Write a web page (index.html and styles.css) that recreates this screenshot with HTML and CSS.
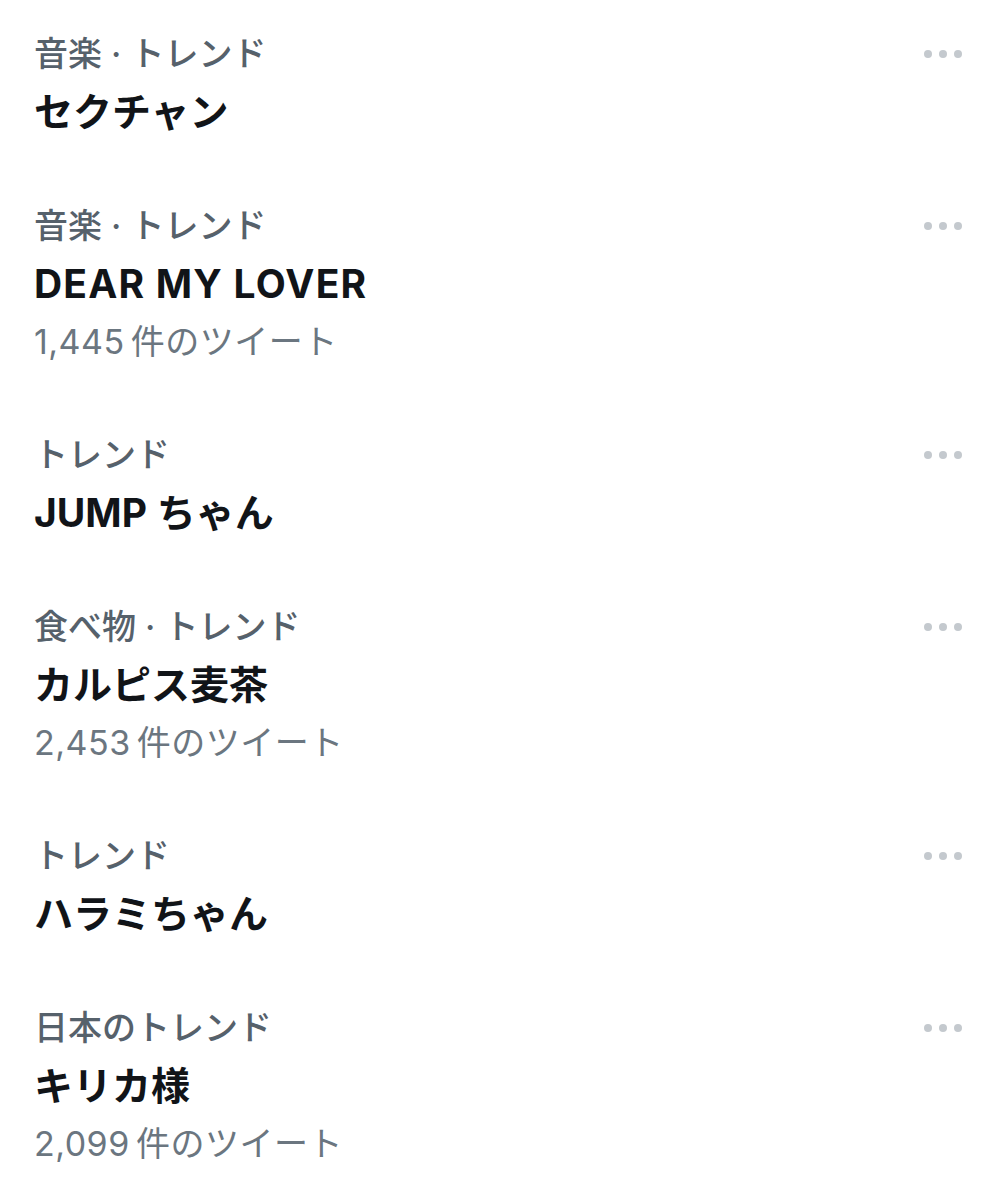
FILE: index.html
```html
<!DOCTYPE html>
<html lang="ja">
<head>
  <meta charset="UTF-8" />
  <meta name="viewport" content="width=device-width, initial-scale=1.0" />
  <title>トレンド</title>
  <link rel="stylesheet" href="styles.css">
</head>
<body>

  <ul class="trends">
    <li class="trend">
      <div class="trend-text">
        <div class="trend-cat">音楽 · トレンド</div>
        <div class="trend-title">セクチャン</div>
      </div>
      <span class="more"><i></i><i></i><i></i></span>
    </li>
    <li class="trend">
      <div class="trend-text">
        <div class="trend-cat">音楽 · トレンド</div>
        <div class="trend-title latin">DEAR MY LOVER</div>
        <div class="trend-count">1,445&#8198;件のツイート</div>
      </div>
      <span class="more"><i></i><i></i><i></i></span>
    </li>
    <li class="trend">
      <div class="trend-text">
        <div class="trend-cat">トレンド</div>
        <div class="trend-title">JUMP&#8197;ちゃん</div>
      </div>
      <span class="more"><i></i><i></i><i></i></span>
    </li>
    <li class="trend">
      <div class="trend-text">
        <div class="trend-cat">食べ物 · トレンド</div>
        <div class="trend-title">カルピス麦茶</div>
        <div class="trend-count">2,453&#8198;件のツイート</div>
      </div>
      <span class="more"><i></i><i></i><i></i></span>
    </li>
    <li class="trend">
      <div class="trend-text">
        <div class="trend-cat">トレンド</div>
        <div class="trend-title">ハラミちゃん</div>
      </div>
      <span class="more"><i></i><i></i><i></i></span>
    </li>
    <li class="trend">
      <div class="trend-text">
        <div class="trend-cat">日本のトレンド</div>
        <div class="trend-title">キリカ様</div>
        <div class="trend-count">2,099&#8198;件のツイート</div>
      </div>
      <span class="more"><i></i><i></i><i></i></span>
    </li>
  </ul>

</body>
</html>
```

FILE: styles.css
```css
body {
  margin: 0;
  background: #fff;
  font-family: Inter, "Noto Sans CJK JP", sans-serif;
}

.trends {
  list-style: none;
  margin: 0;
  padding: 0;
}

.trend {
  display: flex;
  justify-content: space-between;
  align-items: flex-start;
  padding: 25px 36px 31px 34px;
}

.trend-cat {
  font-size: 34px;
  line-height: 58px;
  font-weight: 500;
  color: #56616b;
}

.trend-title {
  font-size: 39px;
  line-height: 58px;
  font-weight: 700;
  color: #111418;
}

.trend-title.latin {
  letter-spacing: 1.2px;
}

.trend-count {
  font-size: 34px;
  line-height: 57px;
  font-weight: 400;
  color: #6b7680;
  letter-spacing: 0.5px;
}

/* 三点メニュー */
.more {
  display: flex;
  gap: 7px;
  margin-top: 25px;
}

.more i {
  width: 8px;
  height: 8px;
  border-radius: 50%;
  background: #c4c9ce;
}
```
